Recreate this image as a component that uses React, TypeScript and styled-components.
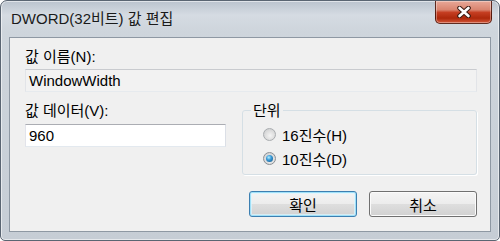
import styled, { createGlobalStyle } from "styled-components";

const GlobalStyle = createGlobalStyle`
  html, body {
    margin: 0;
    padding: 0;
    background: #ffffff;
  }
  body {
    font-family: "Liberation Sans", "Noto Sans CJK KR", sans-serif;
    color: #000;
  }
`;

const Window = styled.div`
  width: 500px;
  height: 241px;
  box-sizing: border-box;
  display: flex;
  flex-direction: column;
  padding: 0 8px 8px 8px;
  border: 1px solid #5a6572;
  border-radius: 7px 7px 5px 5px;
  background: linear-gradient(
    to bottom,
    #bac3cd 0px,
    #d5dbe2 14px,
    #ced5dc 30px,
    #c6cdd5 100%
  );
  box-shadow: inset 0 0 0 1px rgba(255, 255, 255, 0.55);
  overflow: hidden;
`;

const TitleBar = styled.div`
  height: 36px;
  flex: none;
  display: flex;
  align-items: flex-start;
  justify-content: space-between;
`;

const Title = styled.div`
  padding-left: 2px;
  line-height: 36px;
  font-size: 15px;
  color: #1a1a1a;
  white-space: nowrap;
`;

const CloseButton = styled.div`
  width: 57px;
  height: 23px;
  box-sizing: border-box;
  margin-right: -1px;
  display: flex;
  align-items: center;
  justify-content: center;
  border: 1px solid rgba(70, 22, 12, 0.85);
  border-top: none;
  border-radius: 0 0 5px 5px;
  background: linear-gradient(
    to bottom,
    #e8a898 0%,
    #d9846f 40%,
    #c53e22 52%,
    #ad280b 78%,
    #d4573a 100%
  );
  box-shadow: inset 0 0 0 1px rgba(255, 255, 255, 0.35);
`;

const Client = styled.div`
  flex: 1;
  display: flex;
  flex-direction: column;
  padding: 10px 13px 12px 15px;
  background: #f0f0f0;
  border: 1px solid #8e98a3;
`;

const Label = styled.div`
  font-size: 15px;
  line-height: 17px;
  white-space: nowrap;
`;

const TextBox = styled.div<{ $readOnly?: boolean }>`
  height: 23px;
  box-sizing: border-box;
  display: flex;
  align-items: center;
  padding: 0 3px;
  margin-top: ${(p) => (p.$readOnly ? "4px" : "5px")};
  border: 1px solid;
  border-color: ${(p) =>
    p.$readOnly
      ? "#c9cbcf #e2e4e8 #e6eaee #e2e4e8"
      : "#abadb3 #dbdfe6 #e3e9ef #e2e3ea"};
  background: ${(p) => (p.$readOnly ? "#f2f2f2" : "#ffffff")};
  font-size: 15px;
  white-space: nowrap;
`;

const DataRow = styled.div`
  display: grid;
  grid-template-columns: 201px 1fr;
  column-gap: 16px;
  margin-top: 10px;
`;

const Column = styled.div`
  display: flex;
  flex-direction: column;
`;

const GroupBox = styled.fieldset`
  margin: 0;
  min-width: 0;
  padding: 3px 0 4px 8px;
  border: 1px solid #d5dfe5;
  border-radius: 3px;
  box-shadow: 1px 1px 0 #ffffff;
`;

const Legend = styled.legend`
  padding: 0 2px;
  font-size: 15px;
  line-height: 17px;
`;

const RadioList = styled.div`
  display: flex;
  flex-direction: column;
  padding-left: 12px;
`;

const RadioRow = styled.div`
  height: 24px;
  display: flex;
  align-items: center;
  gap: 6px;
  font-size: 15px;
  white-space: nowrap;
`;

const RadioDot = styled.span<{ $checked?: boolean }>`
  width: 13px;
  height: 13px;
  box-sizing: border-box;
  border-radius: 50%;
  border: 1px solid ${(p) => (p.$checked ? "#8a8f94" : "#a9acaf")};
  background: radial-gradient(
    circle at 55% 60%,
    #f4f4f4 0,
    #dedede 50%,
    #c6c8ca 100%
  );
  display: flex;
  align-items: center;
  justify-content: center;
  flex: none;

  &::after {
    content: "";
    display: ${(p) => (p.$checked ? "block" : "none")};
    width: 7px;
    height: 7px;
    border-radius: 50%;
    background: radial-gradient(
      circle at 40% 35%,
      #b4f0ff 0,
      #3a9ad8 40%,
      #11507f 100%
    );
  }
`;

const ButtonRow = styled.div`
  display: flex;
  justify-content: flex-end;
  gap: 12px;
  margin-top: 16px;
`;

const Button = styled.div<{ $default?: boolean }>`
  width: 108px;
  height: 26px;
  box-sizing: border-box;
  display: flex;
  align-items: center;
  justify-content: center;
  font-size: 15px;
  border-radius: 3px;
  border: 1px solid ${(p) => (p.$default ? "#3c7fb1" : "#707070")};
  background: linear-gradient(
    to bottom,
    #f4f4f4 0%,
    #ececec 50%,
    #dedede 51%,
    #d1d1d1 100%
  );
  box-shadow: ${(p) =>
    p.$default
      ? "inset 0 0 0 1px #9fe0f8, inset 0 0 0 2px rgba(220, 245, 255, 0.7)"
      : "inset 0 0 0 1px #fbfbfb"};
`;

function CloseGlyph() {
  const d = "M2.5 2 L11.5 10 M11.5 2 L2.5 10";
  return (
    <svg width="14" height="12" viewBox="0 0 14 12">
      <path d={d} stroke="#3a1a12" strokeWidth="4.6" strokeLinecap="round" />
      <path d={d} stroke="#ffffff" strokeWidth="2.6" strokeLinecap="round" />
    </svg>
  );
}

export default function App() {
  return (
    <>
      <GlobalStyle />
      <Window>
        <TitleBar>
          <Title>DWORD(32비트) 값 편집</Title>
          <CloseButton>
            <CloseGlyph />
          </CloseButton>
        </TitleBar>
        <Client>
          <Label>값 이름(N):</Label>
          <TextBox $readOnly>WindowWidth</TextBox>
          <DataRow>
            <Column>
              <Label>값 데이터(V):</Label>
              <TextBox>960</TextBox>
            </Column>
            <GroupBox>
              <Legend>단위</Legend>
              <RadioList>
                <RadioRow>
                  <RadioDot />
                  16진수(H)
                </RadioRow>
                <RadioRow>
                  <RadioDot $checked />
                  10진수(D)
                </RadioRow>
              </RadioList>
            </GroupBox>
          </DataRow>
          <ButtonRow>
            <Button $default>확인</Button>
            <Button>취소</Button>
          </ButtonRow>
        </Client>
      </Window>
    </>
  );
}
